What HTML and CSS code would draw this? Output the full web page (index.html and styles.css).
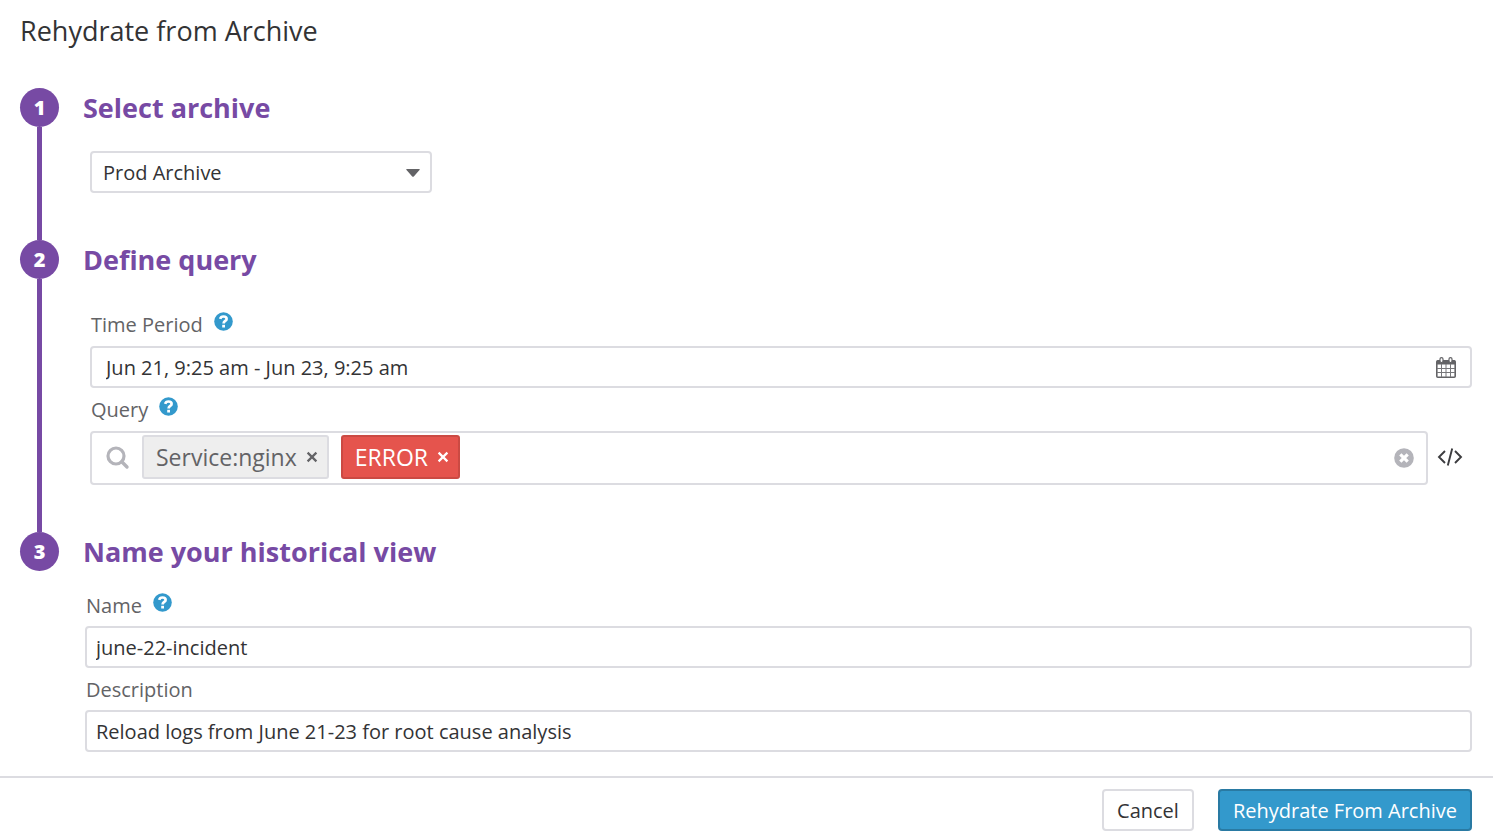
FILE: index.html
```html
<!DOCTYPE html>
<html lang="en">

<head>
    <meta charset="UTF-8">
    <meta name="viewport" content="width=device-width, initial-scale=1.0">
    <title>Rehydrate from Archive</title>
    <link rel="stylesheet" href="styles.css">
</head>

<body>
    <!-- Shared icons -->
    <svg class="sprite" aria-hidden="true">
        <symbol id="icon-help" viewBox="0 0 19 19">
            <circle cx="9.5" cy="9.5" r="9.3" fill="#3399cc" />
            <path d="M6.2 6.9C6.6 5.2 7.8 4.5 9.5 4.5C11.4 4.5 12.6 5.5 12.6 6.9C12.6 9 9.6 8.9 9.6 11.4" fill="none" stroke="#fff" stroke-width="2.7" />
            <path d="M8.2 12.8h2.8v2.7H8.2z" fill="#fff" />
        </symbol>
        <symbol id="icon-close" viewBox="0 0 12 12">
            <path d="M1.6 1.6L10.4 10.4M10.4 1.6L1.6 10.4" fill="none" stroke="currentColor" stroke-width="2.2" />
        </symbol>
    </svg>

    <form class="dialog">
        <h1 class="title">Rehydrate from Archive</h1>

        <main class="steps">
            <section class="step">
                <div class="marker"><span class="number">1</span></div>
                <div class="content">
                    <h2>Select archive</h2>
                    <div class="fields">
                        <div class="select">
                            <select aria-label="Archive">
                                <option>Prod Archive</option>
                            </select>
                            <svg class="caret" width="14" height="8" viewBox="0 0 14 8" aria-hidden="true">
                                <path d="M1 0H13Q14.4 0 13.5 1L8 7.2Q7 8.2 6 7.2L.5 1Q-.4 0 1 0Z" fill="#636366" />
                            </svg>
                        </div>
                    </div>
                </div>
            </section>

            <section class="step">
                <div class="marker"><span class="number">2</span></div>
                <div class="content">
                    <h2>Define query</h2>
                    <div class="fields">
                        <div class="label-row">
                            <label for="period">Time Period</label>
                            <button type="button" class="help" aria-label="Time period help"><svg width="19" height="19"><use href="#icon-help" /></svg></button>
                        </div>
                        <div class="box period">
                            <input type="text" id="period" value="Jun 21, 9:25 am - Jun 23, 9:25 am">
                            <button type="button" aria-label="Open calendar">
                                <svg width="20" height="21" viewBox="0 0 20 21">
                                    <rect x=".8" y="3.8" width="18.4" height="16.4" rx="1" fill="#fff" stroke="#636366" stroke-width="1.6" />
                                    <path d="M1 3.5h18v4H1z" fill="#636366" />
                                    <path d="M1 11.5h18M1 15.5h18M5.5 7v13M10 7v13M14.5 7v13" stroke="#77777a" stroke-width="1" />
                                    <rect x="4" y=".6" width="3" height="5" rx="1.5" fill="#fff" stroke="#636366" stroke-width="1.2" />
                                    <rect x="13" y=".6" width="3" height="5" rx="1.5" fill="#fff" stroke="#636366" stroke-width="1.2" />
                                </svg>
                            </button>
                        </div>
                        <div class="label-row">
                            <label for="query">Query</label>
                            <button type="button" class="help" aria-label="Query help"><svg width="19" height="19"><use href="#icon-help" /></svg></button>
                        </div>
                        <div class="query-row">
                            <div class="box query">
                                <svg class="search" width="24" height="24" viewBox="0 0 24 24" aria-hidden="true">
                                    <circle cx="10" cy="10" r="8" fill="none" stroke="#b4b4ba" stroke-width="3.2" />
                                    <path d="M15.8 15.8L21 21" stroke="#b4b4ba" stroke-width="3.4" stroke-linecap="round" />
                                </svg>
                                <span class="tag">Service:nginx
                                    <button type="button" aria-label="Remove Service:nginx"><svg width="12" height="12"><use href="#icon-close" /></svg></button>
                                </span>
                                <span class="tag error">ERROR
                                    <button type="button" aria-label="Remove ERROR"><svg width="12" height="12"><use href="#icon-close" /></svg></button>
                                </span>
                                <input type="text" id="query">
                                <button type="button" aria-label="Clear query">
                                    <svg width="20" height="20" viewBox="0 0 20 20">
                                        <circle cx="10" cy="10" r="9.8" fill="#b4b4ba" />
                                        <path d="M6.3 6.3L13.7 13.7M13.7 6.3L6.3 13.7" stroke="#fff" stroke-width="3.2" />
                                    </svg>
                                </button>
                            </div>
                            <button type="button" aria-label="Edit as code">
                                <svg width="26" height="20" viewBox="0 0 26 20">
                                    <path d="M8 3L2 9L8 15M18 3L24 9L18 15M15.2 .4L10.8 17.6" fill="none" stroke="#3c3c3f" stroke-width="1.9" />
                                </svg>
                            </button>
                        </div>
                    </div>
                </div>
            </section>

            <section class="step">
                <div class="marker"><span class="number">3</span></div>
                <div class="content">
                    <h2>Name your historical view</h2>
                    <div class="fields naming">
                        <div class="label-row">
                            <label for="name">Name</label>
                            <button type="button" class="help" aria-label="Name help"><svg width="19" height="19"><use href="#icon-help" /></svg></button>
                        </div>
                        <div class="box"><input type="text" id="name" value="june-22-incident"></div>
                        <div class="label-row">
                            <label for="description">Description</label>
                        </div>
                        <div class="box"><input type="text" id="description" value="Reload logs from June 21-23 for root cause analysis"></div>
                    </div>
                </div>
            </section>
        </main>

        <footer class="actions">
            <button type="button" class="btn">Cancel</button>
            <button type="submit" class="btn primary">Rehydrate From Archive</button>
        </footer>
    </form>
</body>

</html>
```
FILE: styles.css
```css
* {
    box-sizing: border-box;
}

body {
    margin: 0;
    background-color: #fff;
    color: #333335;
    font-family: "Open Sans", "Noto Sans", sans-serif;
    font-size: 20px;
}

button,
input,
select {
    font: inherit;
    color: inherit;
}

button {
    display: flex;
    align-items: center;
    padding: 0;
    border: 0;
    background: none;
    cursor: pointer;
}

svg {
    display: block;
}

.sprite {
    position: absolute;
    width: 0;
    height: 0;
}

.title {
    margin: 0;
    padding: 12px 20px 38px;
    font-size: 27px;
    font-weight: 400;
    line-height: 38px;
}

.steps {
    padding: 0 21px 24px 20px;
}

.step {
    display: flex;
    gap: 24px;
}

/* Numbered circle with the line down to the next step */
.marker {
    display: flex;
    flex-direction: column;
    align-items: center;
}

.number {
    width: 39px;
    height: 39px;
    border-radius: 50%;
    background-color: #774aa4;
    color: #fff;
    font-weight: 800;
    line-height: 39px;
    text-align: center;
}

.step:not(:last-child) .marker::after {
    content: "";
    flex: 1;
    width: 5px;
    background-color: #774aa4;
}

.content {
    flex: 1;
    min-width: 0;
}

.step:not(:last-child) .content {
    padding-bottom: 47px;
}

h2 {
    margin: 0;
    color: #774aa4;
    font-size: 27px;
    font-weight: 700;
    line-height: 39px;
}

.fields {
    padding: 24px 0 0 7px;
}

.fields.naming {
    padding: 13px 0 0 2px;
}

.label-row {
    display: flex;
    align-items: center;
    gap: 11px;
    height: 43px;
    padding-left: 1px;
    color: #636366;
}

.naming .label-row {
    height: 42px;
}

.help {
    margin-bottom: 6px;
}

.box,
.select select {
    border: 2px solid #dcdce1;
    border-radius: 4px;
    background-color: #fff;
}

.box {
    display: flex;
    align-items: center;
    height: 42px;
    padding: 0 9px;
}

.box input {
    flex: 1;
    min-width: 0;
    padding: 0;
    border: 0;
    outline: 0;
    background: none;
}

.box.period {
    padding: 0 14px;
}

.select {
    position: relative;
    max-width: 342px;
}

.select select {
    display: block;
    width: 100%;
    height: 42px;
    padding: 0 40px 0 11px;
    appearance: none;
}

.caret {
    position: absolute;
    top: 18px;
    right: 12px;
    pointer-events: none;
}

.query-row {
    display: flex;
    align-items: center;
    gap: 9px;
    padding-right: 9px;
}

.box.query {
    flex: 1;
    gap: 12px;
    height: 54px;
    padding: 0 12px 0 14px;
}

.tag {
    display: flex;
    align-items: center;
    gap: 9px;
    height: 44px;
    margin-bottom: 2px;
    padding: 0 9px 0 12px;
    border: 2px solid #dcdce1;
    border-radius: 3px;
    background-color: #eee;
    color: #636366;
    font-size: 23px;
}

.tag.error {
    border-color: #cb4a43;
    background-color: #e5544d;
    color: #fff;
}

.actions {
    display: flex;
    justify-content: flex-end;
    gap: 24px;
    padding: 11px 21px 8px;
    border-top: 2px solid #dcdce1;
}

.btn {
    height: 42px;
    padding: 0 13px;
    border: 2px solid #dcdce1;
    border-radius: 4px;
    background-color: #fff;
}

.btn.primary {
    border-color: #297aa3;
    background-color: #3399cc;
    color: #fff;
}
```
